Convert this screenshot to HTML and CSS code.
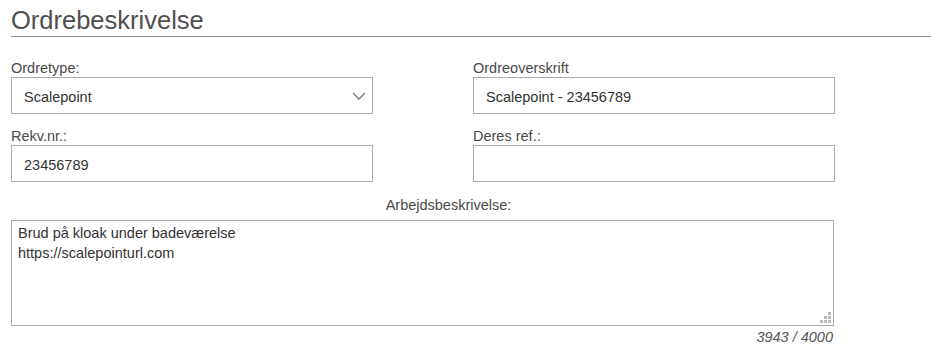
FILE: index.html
```html
<!DOCTYPE html>
<html lang="da">
<head>
<meta charset="utf-8">
<title>Ordrebeskrivelse</title>
<link rel="stylesheet" href="styles.css">
</head>
<body>
<section class="order">
  <h1 class="order-title">Ordrebeskrivelse</h1>
  <div class="grid">
    <div class="field">
      <label class="label" for="ordretype">Ordretype:</label>
      <div class="select-wrap">
        <select id="ordretype" class="control select">
          <option>Scalepoint</option>
        </select>
        <svg class="chevron" width="14" height="8" viewBox="0 0 14 8" aria-hidden="true"><polyline points="1,1 7,7 13,1" fill="none" stroke="#777" stroke-width="1.4"/></svg>
      </div>
    </div>
    <div class="field">
      <label class="label" for="overskrift">Ordreoverskrift</label>
      <input id="overskrift" class="control" type="text" value="Scalepoint - 23456789">
    </div>
    <div class="field">
      <label class="label" for="rekv">Rekv.nr.:</label>
      <input id="rekv" class="control" type="text" value="23456789">
    </div>
    <div class="field">
      <label class="label" for="ref">Deres ref.:</label>
      <input id="ref" class="control" type="text" value="">
    </div>
  </div>
  <div class="desc">
    <label class="label desc-label" for="arbejde">Arbejdsbeskrivelse:</label>
    <div class="textarea-wrap">
      <textarea id="arbejde" class="textarea">Brud på kloak under badeværelse
https://scalepointurl.com</textarea>
      <svg class="grip" width="11" height="11" viewBox="0 0 11 11" aria-hidden="true">
        <rect x="8" y="0" width="3" height="3" fill="#bbb"/>
        <rect x="4" y="4" width="3" height="3" fill="#bbb"/>
        <rect x="8" y="4" width="3" height="3" fill="#bbb"/>
        <rect x="0" y="8" width="3" height="3" fill="#bbb"/>
        <rect x="4" y="8" width="3" height="3" fill="#bbb"/>
        <rect x="8" y="8" width="3" height="3" fill="#bbb"/>
      </svg>
    </div>
    <div class="counter">3943 / 4000</div>
  </div>
</section>
</body>
</html>
```
FILE: styles.css
```css
html, body {
  margin: 0;
  padding: 0;
  background: #fff;
}
body {
  font-family: "Liberation Sans", Arial, sans-serif;
  font-size: 14.5px;
  color: #444;
}
.order {
  padding-left: 11px;
}
.order-title {
  margin: 0;
  padding: 5px 0 1px 0;
  font-size: 25.5px;
  line-height: 30px;
  font-weight: normal;
  color: #505050;
  border-bottom: 1px solid #8c8c8c;
}
.grid {
  width: 824px;
  margin-top: 24px;
  display: grid;
  grid-template-columns: 362px 362px;
  column-gap: 100px;
  row-gap: 15px;
}
.field {
  display: flex;
  flex-direction: column;
}
.label {
  display: block;
  font-size: 14.5px;
  line-height: 15px;
  color: #4a4a4a;
  margin-bottom: 1px;
}
.control {
  box-sizing: border-box;
  width: 100%;
  height: 37px;
  margin: 0;
  border: 1px solid #ababab;
  border-radius: 0;
  background: #fff;
  padding: 2px 12px 0 12px;
  font-family: "Liberation Sans", Arial, sans-serif;
  font-size: 14.5px;
  color: #333;
  outline: none;
}
.select-wrap {
  position: relative;
}
.select {
  appearance: none;
  -webkit-appearance: none;
  display: block;
}
.chevron {
  position: absolute;
  right: 7px;
  top: 15px;
  pointer-events: none;
}
.desc {
  width: 824px;
  margin-top: 16px;
}
.desc-label {
  text-align: center;
  padding-left: 51px;
  margin-bottom: 7px;
}
.textarea-wrap {
  position: relative;
}
.textarea {
  display: block;
  box-sizing: border-box;
  width: 823px;
  height: 106px;
  margin: 0;
  border: 1px solid #ababab;
  padding: 2px 6px;
  font-family: "Liberation Sans", Arial, sans-serif;
  font-size: 14.5px;
  line-height: 20px;
  color: #333;
  resize: none;
  outline: none;
}
.grip {
  position: absolute;
  right: 4px;
  bottom: 3px;
}
.counter {
  width: 822px;
  margin-top: 3px;
  text-align: right;
  font-style: italic;
  font-size: 14.5px;
  line-height: 16px;
  color: #555;
}
```
